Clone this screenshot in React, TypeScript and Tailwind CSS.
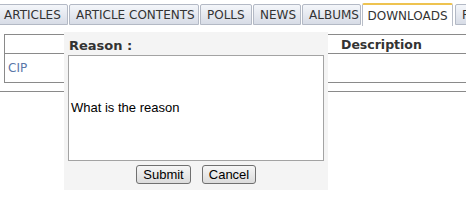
const TABS = [
  { label: "ARTICLES", w: "w-[71px]" },
  { label: "ARTICLE CONTENTS", w: "w-[130px]" },
  { label: "POLLS", w: "w-[52px]" },
  { label: "NEWS", w: "w-[48px]" },
  { label: "ALBUMS", w: "w-[59px]" },
  { label: "DOWNLOADS", w: "w-[91px]" },
  { label: "RSS", w: "w-[40px]" },
];
const ACTIVE = "DOWNLOADS";

function Tab({ label, w }: { label: string; w: string }) {
  if (label === ACTIVE) {
    return (
      <div className={`${w} shrink-0 h-[23px] mt-[-1px] mr-[1px] flex items-center justify-center bg-white border border-[#b9bec8] border-b-0 border-t-2 border-t-[#eec350] rounded-t-[2px] text-[12px] leading-none text-[#333]`}>
        {label}
      </div>
    );
  }
  return (
    <div className={`${w} shrink-0 h-[21px] pl-[6px] flex items-center bg-gradient-to-b from-[#f4f6fa] to-[#d7dce6] border border-[#b3b9c5] rounded-t-[2px] text-[12px] leading-none text-[#333]`}>
      {label}
    </div>
  );
}

export default function App() {
  return (
    <div className="relative w-[466px] h-[200px] overflow-hidden bg-white font-['DejaVu_Sans',sans-serif]">
      <div className="flex gap-[1px] ml-[-3px] pt-[4px] whitespace-nowrap">
        {TABS.map((t) => (
          <Tab key={t.label} label={t.label} w={t.w} />
        ))}
      </div>

      {/* downloads table */}
      <div className="ml-[4px] mt-[8px] border-t border-l border-[#8a8a8a]">
        <div className="flex h-[19px] border-b border-[#8a8a8a]">
          <div className="w-[200px] border-r border-[#8a8a8a]" />
          <div className="flex-1 pl-[136px] text-[12.5px] font-bold leading-[19px] text-[#333]">Description</div>
        </div>
        <div className="flex h-[29px] border-b border-[#8a8a8a]">
          <div className="w-[200px] pl-[3px] pt-[8px] text-[12px] leading-none text-[#5a76a8]">CIP</div>
        </div>
      </div>
      <div className="mt-[8px] border-t border-[#8a8a8a]" />

      {/* reason popup */}
      <div className="absolute left-[64px] top-[32px] w-[264px] h-[158px] bg-[#f4f4f4] flex flex-col px-[4px]">
        <div className="h-[23px] pt-[7px] pl-[1px] text-[13px] font-bold leading-none text-[#333]">Reason :</div>
        <div className="h-[106px] w-[256px] bg-white border border-[#a3a3a3] flex items-center pl-[2px] font-['Liberation_Sans',Arial,sans-serif] text-[13px] text-black">
          What is the reason
        </div>
        <div className="flex justify-center gap-[11px] mt-[4px] font-['Liberation_Sans',Arial,sans-serif] text-[13px] text-black">
          <button className="w-[55px] h-[19px] leading-none border border-[#707070] rounded-[3px] bg-gradient-to-b from-[#f6f6f6] to-[#dcdcdc]">
            Submit
          </button>
          <button className="w-[54px] h-[19px] leading-none border border-[#707070] rounded-[3px] bg-gradient-to-b from-[#f6f6f6] to-[#dcdcdc]">
            Cancel
          </button>
        </div>
      </div>
    </div>
  );
}
